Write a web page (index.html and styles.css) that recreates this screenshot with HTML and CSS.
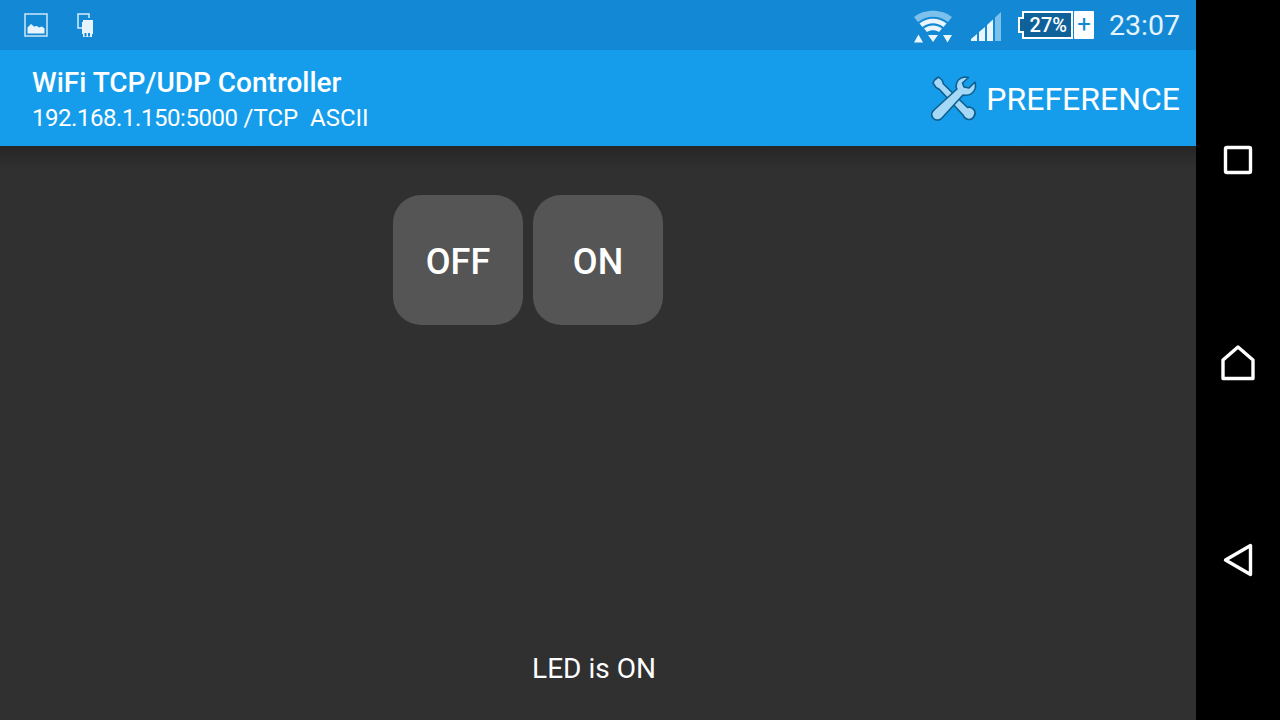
FILE: index.html
```html
<!DOCTYPE html>
<html lang="en">
<head>
<meta charset="utf-8">
<title>WiFi TCP/UDP Controller</title>
<link rel="stylesheet" href="styles.css">
</head>
<body>
<div class="screen">
  <div class="main">
    <header class="status">
      <div class="status-left">
        <svg class="ic-image" width="24" height="24" viewBox="0 0 24 24"><rect x="1" y="1" width="22" height="22" fill="none" stroke="#c4e2f6" stroke-width="1.6"/><path d="M3.500 20.500V14.500L7 11L10 13.500L13 13L15 14.500L18 13.500L20.500 15.500V20.500Z" fill="#e8f4fc"/></svg>
        <svg class="ic-usb" width="17" height="24" viewBox="0 0 17 24"><path d="M5 15H1V1H12V5" fill="none" stroke="#d8ecfa" stroke-width="1.500"/><path d="M5 9H6V7H16V21H15V24H6V21H5Z" fill="#e8f4fc"/><path d="M7.500 20H9.500V23.500H7.500ZM11 20H13V23.500H11Z" fill="#1389d6"/></svg>
      </div>
      <div class="status-right">
        <svg class="ic-wifi" width="40" height="34" viewBox="0 0 40 34">
          <path d="M1 7C11 -1.500 29 -1.500 39 7L35 12C26 5 14 5 5 12Z" fill="#7cc0ec"/>
          <path d="M6.500 13.500C14 7 26 7 33.500 13.500L30.500 17C24 12 16 12 9.500 17Z" fill="#eaf5fd"/>
          <path d="M11 18.500C16.500 14.500 23.500 14.500 29 18.500L26 22C22.500 19.500 17.500 19.500 14 22Z" fill="#eaf5fd"/>
          <path d="M1 32.500L5.500 24.500L10 32.500Z M15 25H25L20 32Z M30 25H39L34.500 32.500Z" fill="#eaf5fd"/>
        </svg>
        <svg class="ic-signal" width="30" height="29" viewBox="0 0 30 29">
          <path d="M24 5.500L30 0V29H24Z" fill="#7cc0ec"/>
          <path d="M16 13L22 7.500V29H16Z M8 20L14 15V29H8Z M0 27L6 22V29H0Z" fill="#eaf5fd"/>
        </svg>
        <div class="battery">
          <div class="batt-body">
            <svg class="batt-shape" width="55" height="28" viewBox="0 0 55 28"><path d="M5 1H54V27H5V21H1V7H5Z" fill="#0f6199" stroke="#fff" stroke-width="2"/></svg>
            <span class="batt-pct">27%</span>
          </div>
          <div class="batt-plus">+</div>
        </div>
        <span class="clock">23:07</span>
      </div>
    </header>
    <div class="appbar">
      <div class="titles">
        <div class="title">WiFi TCP/UDP Controller</div>
        <div class="subtitle"><span class="address">192.168.1.150:5000</span> /TCP&nbsp; ASCII</div>
      </div>
      <div class="pref">
        <svg class="ic-tools" width="46" height="46" viewBox="0 0 46 46">
          <path d="M3.500 5L7.500 2L11 5L12.500 9L36.500 32.500C39 31.500 42 33 43.500 35.500C45.500 39.500 42 45 37 44.500C34.500 44 33 42.500 32 40L8.500 14.500L5 12.500L2 8Z" fill="#a5d8f7" stroke="#0f5f8e" stroke-width="1.600" stroke-linejoin="round"/>
          <path d="M33 2C28 3 25 7 25 12L26 14L3 35C0 38 0 41 2.500 43.500C5 46 9 45.500 11 43L32 20C37 21 42 19 44 14C45 11 44.500 9 44 7L38 13L33 12L31.500 8L37.500 2.500C36 2 34.500 2 33 2Z" fill="#a5d8f7" stroke="#0f5f8e" stroke-width="1.600" stroke-linejoin="round"/>
        </svg>
        <span class="pref-label">PREFERENCE</span>
      </div>
    </div>
    <main class="content">
      <div class="buttons">
        <button class="btn">OFF</button>
        <button class="btn">ON</button>
      </div>
      <div class="led">LED is ON</div>
    </main>
  </div>
  <nav class="navbar">
    <svg class="nav-icon nav-square" width="30" height="30" viewBox="0 0 30 30"><rect x="2.500" y="2.500" width="25" height="25" rx="1.500" fill="none" stroke="#fff" stroke-width="3.400"/></svg>
    <svg class="nav-icon nav-home" width="34" height="36" viewBox="0 0 34 36"><path d="M2 33.500V15L17 2L32 15V33.500Z" fill="none" stroke="#fff" stroke-width="3.400" stroke-linejoin="round"/></svg>
    <svg class="nav-icon nav-back" width="30" height="34" viewBox="0 0 30 34"><path d="M27.500 2.500V31.500L2.500 17Z" fill="none" stroke="#fff" stroke-width="3.400" stroke-linejoin="round"/></svg>
  </nav>
</div>
</body>
</html>
```

FILE: styles.css
```css
* { box-sizing: border-box; }
html, body { margin: 0; padding: 0; }
body { width: 1280px; height: 720px; overflow: hidden; font-family: Roboto, "Liberation Sans", sans-serif; color: #fff; background: #000; }
.screen { display: flex; width: 1280px; height: 720px; }
.main { width: 1196px; display: flex; flex-direction: column; }
.status { height: 50px; flex: none; background: #1389d6; display: flex; justify-content: space-between; align-items: center; padding: 0 16px 0 24px; }
.status-left { display: flex; align-items: center; gap: 29px; }
.status-right { display: flex; align-items: center; }
.ic-wifi { margin-right: 18px; margin-top: 3px; }
.ic-signal { margin-right: 17px; margin-top: 3px; }
.battery { display: flex; width: 76px; height: 28px; margin-right: 15px; }
.batt-body { position: relative; width: 55px; height: 28px; display: flex; align-items: center; justify-content: flex-end; padding-right: 6px; }
.batt-shape { position: absolute; left: 0; top: 0; }
.batt-pct { position: relative; font-size: 20px; font-weight: 500; color: #fff; }
.batt-plus { width: 20px; height: 28px; margin-left: 1px; background: #fff; color: #1389d6; border-radius: 1px; font-size: 24px; line-height: 27px; text-align: center; font-weight: 400; }
.clock { font-size: 28.500px; color: #e6f3fc; line-height: 1; margin-top: 2px; }
.appbar { height: 96px; flex: none; background: #159deb; display: flex; justify-content: space-between; align-items: center; padding: 0 16px 0 32px; }
.titles { display: flex; flex-direction: column; gap: 4px; margin-top: 3px; }
.title { font-size: 28px; font-weight: 500; line-height: 33px; }
.subtitle { font-size: 24px; line-height: 30px; }
.address { letter-spacing: -0.450px; }
.pref { display: flex; align-items: center; gap: 9px; }
.pref-label { font-size: 32px; line-height: 40px; margin-top: 2px; }
.content { flex: 1; background: linear-gradient(#262626, #303030 24px); display: flex; flex-direction: column; justify-content: space-between; padding: 49px 0 34px; }
.buttons { display: flex; gap: 10px; margin-left: 393px; }
.btn { width: 130px; height: 130px; border: 0; border-radius: 28px; background: #555; color: #fff; font-family: inherit; font-size: 36px; font-weight: 500; padding: 4px 0 0; margin: 0; }
.led { text-align: center; font-size: 28px; line-height: 34px; transform: translateX(-4px); }
.navbar { width: 84px; background: #000; display: flex; flex-direction: column; align-items: center; padding-top: 145px; }
.nav-home { margin-top: 170px; }
.nav-back { margin-top: 162px; }
```
